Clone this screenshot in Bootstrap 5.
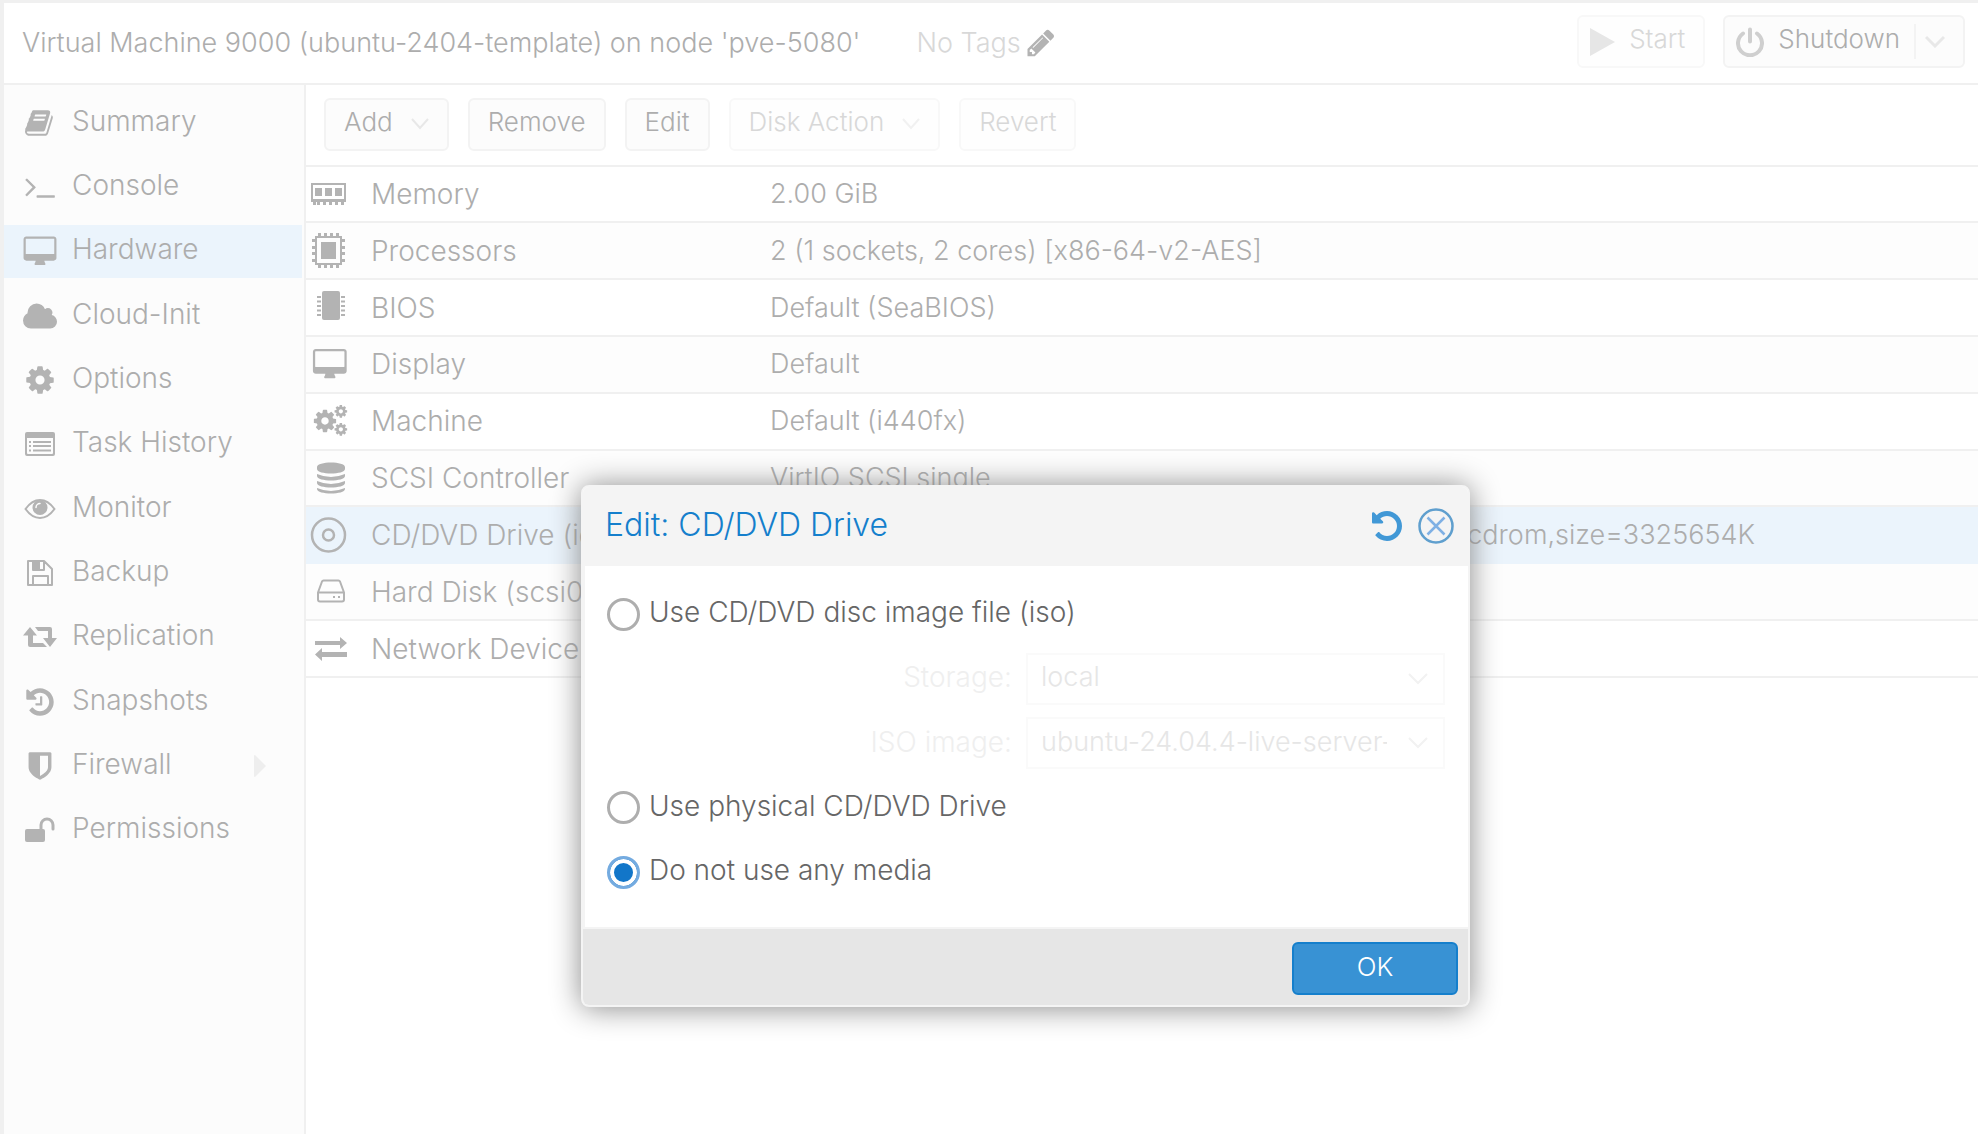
<!DOCTYPE html>
<html lang="en">
<head>
<meta charset="utf-8">
<meta name="viewport" content="width=device-width, initial-scale=1">
<title>Virtual Machine 9000 - Hardware</title>
<link href="https://cdn.jsdelivr.net/npm/bootstrap@5.3.0/dist/css/bootstrap.min.css" rel="stylesheet">
<style>
:root { --muted-ink:#adadad; --glyph:#b3b3b3; --faint-ink:#d8d8d8; --rule:#f0f0f0; --picked:#ebf4fc; --brand:#157fcc; }
body { font-family:Inter,"Liberation Sans",sans-serif; font-weight:300; font-size:27px; line-height:36px; color:var(--muted-ink); background:#fff; }
svg { display:block; flex:none; fill:currentColor; }
.line-art { fill:none; stroke:currentColor; }
.shell { min-height:100vh; border-left:4px solid var(--rule); border-top:3px solid var(--rule); }
.top-bar { height:82px; padding:0 13px 0 18px; border-bottom:2px solid var(--rule); }
.top-bar h1 { font-size:27px; line-height:36px; font-weight:300; margin:0; }
.tags { color:var(--faint-ink); margin-left:56px; gap:6px; }
.tags svg { color:var(--glyph); }
.power-tools { gap:18px; padding-bottom:3px; }
.tool { --bs-btn-font-size:26px; --bs-btn-font-weight:300; --bs-btn-line-height:36px; --bs-btn-padding-x:18px; --bs-btn-padding-y:0;
  --bs-btn-color:var(--muted-ink); --bs-btn-bg:#fcfcfc; --bs-btn-border-color:#f3f3f3; --bs-btn-border-width:2px; --bs-btn-border-radius:6px;
  --bs-btn-disabled-color:var(--faint-ink); --bs-btn-disabled-bg:#fefefe; --bs-btn-disabled-border-color:#f8f8f8; --bs-btn-disabled-opacity:1;
  height:53px; display:flex; align-items:center; gap:18px; }
.tool span { padding-bottom:5px; }
.with-icon { padding-left:11px; gap:14px; }
.tool .chev { color:#e8e8e8; }
.tool:disabled .chev { color:#f1f1f1; }
.split-part { display:flex; align-items:center; height:35px; padding-left:9px; border-left:2px solid #f3f3f3; }
.side { width:302px; background:#fcfcfc; border-right:2px solid var(--rule); padding:11px 2px 0 0; }
.side nav { height:761px; }
.side .nav-link { height:53px; padding:0 28px 0 19px; color:var(--muted-ink); font-size:28px; gap:15px; }
.side .nav-link span { padding-bottom:4px; }
.side .nav-link svg { width:34px; color:var(--glyph); }
.side .nav-link.active { background:var(--picked); }
.side .nav-link .twisty { width:12px; color:#eee; }
.actions { height:82px; padding:13px 18px 0; gap:19px; border-bottom:2px solid var(--rule); }
.specs { --bs-table-color:var(--muted-ink); --bs-table-bg:transparent; height:511px; margin:0; }
.specs > tbody > tr > * { padding:0; border-bottom:2px solid var(--rule); vertical-align:middle; white-space:nowrap; font-weight:300; }
.specs th { width:464px; font-size:28px; }
.specs th svg { color:var(--glyph); }
.specs .spec-name { gap:19px; padding-left:4px; }
.specs tr:nth-child(even) { background:#fdfdfd; }
.specs tr.picked { background:var(--picked); }
.specs tr.picked > * { border-color:var(--picked); }
.dialog-box { position:absolute; left:581px; top:485px; width:889px; background:#fff; border:2px solid #f4f4f4; border-radius:8px; box-shadow:0 1px 30px #888; color:#666; font-size:28px; overflow:hidden; }
.dialog-box header { height:79px; background:#f4f4f4; padding:0 14px 2px 22px; }
.dialog-box h2 { font-size:32px; line-height:40px; font-weight:300; color:var(--brand); margin:0; padding-bottom:2px; }
.tool-icon { padding:0; border:0; background:none; color:#4198d6; }
.dialog-box form { height:361px; padding:16px 23px 23px 22px; border-left:2px solid #f4f4f4; }
.choice { height:64px; gap:9px; }
.choice .form-check-input { width:33px; height:33px; margin:0; border:3px solid #aeaeae; background-color:#fff; background-image:none; }
.choice .form-check-input:checked { border-color:#74abe0; background-color:#1276c9; box-shadow:inset 0 0 0 4px #fff; }
.choice label { padding-bottom:4px; }
.field { height:64px; gap:14px; color:#efefef; }
.field label { padding-bottom:3px; }
.field .form-select { width:419px; height:52px; padding:0 56px 3px 13px; border:2px solid #fafafa; border-radius:0; color:#e6e6e6; background-color:#fff; font-weight:300; font-size:27px; line-height:36px; opacity:1;
  background-image:url("data:image/svg+xml,%3csvg xmlns='http://www.w3.org/2000/svg' viewBox='0 0 20 12'%3e%3cpath fill='none' stroke='%23f2f2f2' stroke-width='2' d='M1 1l9 9 9-9'/%3e%3c/svg%3e"); background-size:20px 12px; background-position:right 15px center; }
.dialog-box footer { height:78px; padding:13px 10px 0; background:#e6e6e6; border-top:2px solid #f4f4f4; }
.confirm { --bs-btn-font-size:26px; --bs-btn-font-weight:300; --bs-btn-line-height:36px; --bs-btn-padding-y:0; --bs-btn-color:#fff; --bs-btn-bg:#3892d4; --bs-btn-border-color:#157fcc; --bs-btn-border-width:2px; --bs-btn-border-radius:6px; width:166px; height:53px; }
.confirm span { display:block; padding-bottom:4px; }
</style>
<script src="https://cdn.jsdelivr.net/npm/bootstrap@5.3.0/dist/js/bootstrap.bundle.min.js"></script>
</head>
<body>
<svg width="0" height="0" class="position-absolute" aria-hidden="true">
  <defs>
    <path id="gear" d="M1152 896q0-106-75-181t-181-75-181 75-75 181 75 181 181 75 181-75 75-181zm512-109v222q0 12-8 23t-20 13l-185 28q-19 54-39 91 35 50 107 138 10 12 10 25t-9 23q-27 37-99 108t-94 71q-12 0-26-9l-138-108q-44 23-91 38-16 136-29 186-7 28-36 28h-222q-14 0-24.500-8.500t-11.500-21.500l-28-184q-49-16-90-37l-141 107q-10 9-25 9-14 0-25-11-126-114-165-168-7-10-7-23 0-12 8-23 15-21 51-66.500t54-70.500q-27-50-41-99l-183-27q-13-2-21-12.500t-8-23.500v-222q0-12 8-23t19-13l186-28q14-46 39-92-40-57-107-138-10-12-10-24 0-10 9-23 26-36 98.500-107.500t94.500-71.500q13 0 26 10l138 107q44-23 91-38 16-136 29-186 7-28 36-28h222q14 0 24.500 8.500t11.500 21.500l28 184q49 16 90 37l142-107q9-9 24-9 13 0 25 10 129 119 165 170 7 8 7 22 0 12-8 23-15 21-51 66.500t-54 70.500q26 50 41 98l183 28q13 2 21 12.500t8 23.500z"/>
    <path id="screen" d="M1728 992v-832q0-13-9.500-22.500t-22.500-9.500h-1600q-13 0-22.500 9.500t-9.500 22.500v832q0 13 9.500 22.500t22.500 9.500h1600q13 0 22.500-9.500t9.500-22.500zm128-832v1088q0 66-47 113t-113 47h-544q0 37 16 77.500t32 71 16 43.500q0 26-19 45t-45 19h-512q-26 0-45-19t-19-45q0-14 16-44t32-70 16-78h-544q-66 0-113-47t-47-113v-1088q0-66 47-113t113-47h1600q66 0 113 47t47 113z"/>
    <path id="rewind" d="M1664 896q0 156-61 298t-164 245-245 164-298 61q-172 0-327-72.500t-264-204.500q-7-10-6.500-22.500t8.500-20.500l137-138q10-9 25-9 16 2 23 12 73 95 179 147t225 52q104 0 198.500-40.500t163.500-109.500 109.500-163.500 40.500-198.500-40.500-198.500-109.500-163.500-163.500-109.500-198.500-40.500q-98 0-188 35.500t-160 101.500l137 138q31 30 14 69-17 40-59 40h-448q-26 0-45-19t-19-45v-448q0-42 40-59 39-17 69 14l130 129q107-101 244.500-156.500t284.500-55.500q156 0 298 61t245 164 164 245 61 298z"/>
  </defs>
</svg>

<div class="shell d-flex flex-column">
  <header class="top-bar d-flex align-items-center">
    <h1>Virtual Machine 9000 (ubuntu-2404-template) on node 'pve-5080'</h1>
    <div class="tags d-flex align-items-center"><span>No Tags</span>
      <svg width="28" height="30" viewBox="100 100 1600 1600"><path d="M491 1536l91-91-235-235-91 91v107h128v128h107zm523-928q0-22-22-22-10 0-17 7l-542 542q-7 7-7 17 0 22 22 22 10 0 17-7l542-542q7-7 7-17zm-54-192l416 416-832 832h-416v-416zm683 96q0 53-37 90l-166 166-416-416 166-165q36-38 90-38 53 0 91 38l235 234q37 39 37 91z"/></svg>
    </div>
    <div class="power-tools ms-auto d-flex">
      <button class="btn tool with-icon" type="button" disabled>
        <svg width="25" height="28" viewBox="0 0 25 28" color="#e6e6e6"><path d="M0 0l25 14-25 14z"/></svg><span>Start</span></button>
      <button class="btn tool with-icon" type="button">
        <svg class="line-art" width="28" height="30" viewBox="0 0 28 30" color="#cfcfcf" stroke-width="4" stroke-linecap="round"><path d="M7 6.500a12 12 0 1 0 14 0M14 2.500v12"/></svg><span>Shutdown</span>
        <i class="split-part"><svg class="line-art chev" width="20" height="13" viewBox="0 0 20 13" stroke-width="3"><path d="M1 2l9 9 9-9"/></svg></i></button>
    </div>
  </header>

  <div class="d-flex flex-grow-1">
    <aside class="side flex-shrink-0">
      <nav class="nav flex-column flex-nowrap justify-content-between">
        <a class="nav-link d-flex align-items-center" href="#"><svg height="30" viewBox="0 0 1792 1792"><path d="M1639 478q40 57 18 129l-275 906q-19 64-76.500 107.500t-122.500 43.500h-923q-77 0-148.500-53.500t-99.500-131.500q-24-67-2-127 0-4 3-27t4-37q1-8-3-21.500t-3-19.500q2-11 8-21t16.500-23.500 16.500-23.500q23-38 45-91.500t30-91.500q3-10 .5-30t-.5-28q3-11 17-28t17-23q21-36 42-92t25-90q1-9-2.500-32t.5-28q4-13 22-30.500t22-22.500q19-26 42.500-84.500t27.500-96.500q1-8-3-25.500t-2-26.500q2-8 9-18t18-23 17-21q8-12 16.500-30.500t15-35 16-36 19.500-32 26.500-23.500 36-11.500 47.500 5.500l-1 3q38-9 51-9h761q74 0 114 56t18 130l-274 906q-36 119-71.500 153.500t-128.500 34.500h-869q-27 0-38 15-11 16-1 43 24 70 144 70h923q29 0 56-15.500t35-41.500l300-987q7-22 5-57 38 15 59 43zm-1064 2q-4 13 2 22.500t20 9.500h608q13 0 25.500-9.500t16.500-22.500l21-64q4-13-2-22.500t-20-9.500h-608q-13 0-25.500 9.500t-16.500 22.500zm-83 256q-4 13 2 22.500t20 9.500h608q13 0 25.500-9.500t16.500-22.500l21-64q4-13-2-22.500t-20-9.500h-608q-13 0-25.500 9.500t-16.500 22.500z"/></svg><span>Summary</span></a>
        <a class="nav-link d-flex align-items-center" href="#"><svg height="30" viewBox="0 100 1792 1680"><path d="M649 983l-466 466q-10 10-23 10t-23-10l-50-50q-10-10-10-23t10-23l393-393-393-393q-10-10-10-23t10-23l50-50q10-10 23-10t23 10l466 466q10 10 10 23t-10 23zm1079 457v64q0 14-9 23t-23 9h-960q-14 0-23-9t-9-23v-64q0-14 9-23t23-9h960q14 0 23 9t9 23z"/></svg><span>Console</span></a>
        <a class="nav-link d-flex align-items-center active" href="#" aria-current="page"><svg height="31" viewBox="-96 0 1984 1750"><use href="#screen"/></svg><span>Hardware</span></a>
        <a class="nav-link d-flex align-items-center" href="#"><svg height="26" viewBox="64 128 1920 1408"><path d="M1984 1152q0 159-112.500 271.500t-271.500 112.500h-1088q-185 0-316.500-131.500t-131.500-316.500q0-132 71-241.500t187-163.500q-2-28-2-43 0-212 150-362t362-150q158 0 286.500 88t187.500 230q70-62 166-62 106 0 181 75t75 181q0 75-41 138 129 30 213 134.500t84 239.500z"/></svg><span>Cloud-Init</span></a>
        <a class="nav-link d-flex align-items-center" href="#"><svg height="32" viewBox="0 0 1792 1792"><use href="#gear"/></svg><span>Options</span></a>
        <a class="nav-link d-flex align-items-center" href="#"><svg height="26" viewBox="0 0 32 26"><path fill-rule="evenodd" d="M3 1h26a2 2 0 0 1 2 2v20a2 2 0 0 1-2 2H3a2 2 0 0 1-2-2V3a2 2 0 0 1 2-2zm0 6v15q0 1 1 1h24q1 0 1-1V7z"/><path d="M5 10h2v2H5zM5 14h2v2H5zM5 18.500h2v2H5zM9 10h18v2H9zM9 14h18v2H9zM9 18.500h18v2H9z"/></svg><span>Task History</span></a>
        <a class="nav-link d-flex align-items-center" href="#"><svg height="22" viewBox="0 0 32 22"><path class="line-art" stroke-width="2" d="M1.500 11Q8 2 16 2t14.500 9q-6.500 9-14.500 9T1.500 11z"/><circle cx="16" cy="9.500" r="7.500"/><path d="M12 9.500a4 4 0 0 1 4-4" fill="none" stroke="#fcfcfc" stroke-width="1.500" stroke-linecap="round"/></svg><span>Monitor</span></a>
        <a class="nav-link d-flex align-items-center" href="#"><svg height="28" viewBox="0 0 32 28"><path class="line-art" stroke-width="2" stroke-linejoin="round" d="M4 2h16l8 8v16H4zM9 26v-9h15v9M9 2v9h11V2"/><path d="M10 2h6v8h-6z"/></svg><span>Backup</span></a>
        <a class="nav-link d-flex align-items-center" href="#"><svg height="22" viewBox="0 0 34 22"><path d="M7 1l7 8.500h-4V17h10l4 4H7q-2 0-2-2V9.500H0zM12 1h15q2 0 2 2v9h5l-7 9-7-9h5V5H15z"/></svg><span>Replication</span></a>
        <a class="nav-link d-flex align-items-center" href="#"><svg height="32" viewBox="0 0 1792 1792"><use href="#rewind"/><path d="M1024 608v448q0 14-9 23t-23 9h-320q-14 0-23-9t-9-23v-64q0-14 9-23t23-9h224v-352q0-14 9-23t23-9h64q14 0 23 9t9 23z"/></svg><span>Snapshots</span></a>
        <a class="nav-link d-flex align-items-center" href="#"><svg height="32" viewBox="0 0 1792 1792"><path d="M1344 960v-640h-448v1137q119-63 213-137 235-184 235-360zm192-768v768q0 86-33.500 170.500t-83 150-118 127.500-126.500 103-121 77.500-89.500 49.500-42.500 20q-12 6-26 6t-26-6q-16-7-42.500-20t-89.500-49.500-121-77.500-126.500-103-118-127.500-83-150-33.500-170.500v-768q0-26 19-45t45-19h1152q26 0 45 19t19 45z"/></svg><span>Firewall</span><svg class="twisty ms-auto me-2" height="22" viewBox="0 0 12 22"><path d="M0 1q0-1 1-1l11 11L1 22q-1 0-1-1z"/></svg></a>
        <a class="nav-link d-flex align-items-center" href="#"><svg height="26" viewBox="0 0 32 26"><rect x="1" y="12" width="20" height="13" rx="2"/><path class="line-art" stroke-width="3" stroke-linecap="round" d="M17 12V8a6 6 0 0 1 12 0v4"/></svg><span>Permissions</span></a>
      </nav>
    </aside>

    <main class="flex-grow-1">
      <div class="actions d-flex">
        <button class="btn tool" type="button"><span>Add</span><svg class="line-art chev" width="18" height="13" viewBox="0 0 18 13" stroke-width="2"><path d="M1 1l8 9 8-9"/></svg></button>
        <button class="btn tool" type="button"><span>Remove</span></button>
        <button class="btn tool" type="button"><span>Edit</span></button>
        <button class="btn tool" type="button" disabled><span>Disk Action</span><svg class="line-art chev" width="18" height="13" viewBox="0 0 18 13" stroke-width="2"><path d="M1 1l8 9 8-9"/></svg></button>
        <button class="btn tool" type="button" disabled><span>Revert</span></button>
      </div>
      <table class="table specs">
        <tbody>
          <tr><th scope="row"><div class="spec-name d-flex align-items-center"><svg width="42" height="23" viewBox="-1 0 42 23"><path fill-rule="evenodd" d="M0 0h35v19h-2v3h-3v-3h-3v3h-3v-3h-3v3h-3v-3h-3v3h-3v-3H9v3H6v-3H5v3H2v-3H0zM2 2v14h31V2z"/><path d="M4 5h7v8H4zM14 5h7v8h-7zM24 5h7v8h-7z"/></svg>Memory</div></th><td>2.00 GiB</td></tr>
          <tr><th scope="row"><div class="spec-name d-flex align-items-center"><svg width="42" height="35" viewBox="-1 0 42 35"><path class="line-art" stroke-width="2" d="M5 4h25v27H5z"/><path d="M10 9h15v17H10zM7 0h3v3H7zM13 0h3v3h-3zM19 0h3v3h-3zM25 0h3v3h-3zM7 32h3v3H7zM13 32h3v3h-3zM19 32h3v3h-3zM25 32h3v3h-3zM1 6h3v3H1zM1 13h3v3H1zM1 19h3v3H1zM1 26h3v3H1zM31 6h3v3h-3zM31 13h3v3h-3zM31 19h3v3h-3zM31 26h3v3h-3z"/></svg>Processors</div></th><td>2 (1 sockets, 2 cores) [x86-64-v2-AES]</td></tr>
          <tr><th scope="row"><div class="spec-name d-flex align-items-center"><svg width="42" height="34" viewBox="-1 0 42 34"><rect x="11" y="0" width="18" height="29" rx="2"/><path class="line-art" stroke-width="2" d="M6 6h4M6 10.500h4M6 15h4M6 19.500h4M6 24h4M30 6h4M30 10.500h4M30 15h4M30 19.500h4M30 24h4"/></svg>BIOS</div></th><td>Default (SeaBIOS)</td></tr>
          <tr><th scope="row"><div class="spec-name d-flex align-items-center"><svg width="42" height="31" viewBox="-230 0 2388 1763"><use href="#screen"/></svg>Display</div></th><td>Default</td></tr>
          <tr><th scope="row"><div class="spec-name d-flex align-items-center"><svg width="42" height="32" viewBox="-1 0 42 32"><use href="#gear" transform="translate(1 3) scale(.0145)"/><use href="#gear" transform="translate(22.500 -1) scale(.0082)"/><use href="#gear" transform="translate(22.500 17) scale(.0082)"/></svg>Machine</div></th><td>Default (i440fx)</td></tr>
          <tr><th scope="row"><div class="spec-name d-flex align-items-center"><svg width="42" height="32" viewBox="-1 0 42 32"><path d="M6 5c0-6 28-6 28 0v2c0 6-28 6-28 0zM6 12q14 6 28 0v2c0 6-28 6-28 0zM6 19q14 6 28 0v2c0 6-28 6-28 0zM6 26q14 6 28 0v1c0 6-28 6-28 0z"/></svg>SCSI Controller</div></th><td>VirtIO SCSI single</td></tr>
          <tr class="picked"><th scope="row"><div class="spec-name d-flex align-items-center"><svg class="line-art" width="42" height="36" viewBox="-1 0 42 36" stroke-width="2.500"><circle cx="17.500" cy="18" r="16.500"/><circle cx="17.500" cy="18" r="5.500"/></svg>CD/DVD Drive (ide2)</div></th><td>local:iso/ubuntu-24.04.4-live-server-amd64.iso,media=cdrom,size=3325654K</td></tr>
          <tr><th scope="row"><div class="spec-name d-flex align-items-center"><svg class="line-art" width="42" height="26" viewBox="-1 0 42 26" stroke-width="2" stroke-linejoin="round"><path d="M7 13.500L11 2.500q.5-1 1.500-1h15q1 0 1.500 1l4 11v7q0 2-2 2H9q-2 0-2-2zM7 13.500h26M22 18h2M27 18h2"/></svg>Hard Disk (scsi0)</div></th><td></td></tr>
          <tr><th scope="row"><div class="spec-name d-flex align-items-center"><svg width="42" height="24" viewBox="-1 0 42 24"><path d="M4 4h25V0l7 6-7 6V8H4zM36 15H11v-4l-7 6.500 7 6.500v-4h25z"/></svg>Network Device (net0)</div></th><td></td></tr>
        </tbody>
      </table>
    </main>
  </div>
</div>

<section class="dialog-box" role="dialog" aria-labelledby="dlgTitle">
  <header class="d-flex align-items-center">
    <h2 id="dlgTitle" class="me-auto">Edit: CD/DVD Drive</h2>
    <button class="tool-icon me-3" type="button" aria-label="Reset"><svg width="30" height="30" viewBox="128 128 1536 1536"><use href="#rewind"/></svg></button>
    <button class="tool-icon" type="button" aria-label="Close"><svg class="line-art" width="36" height="36" viewBox="0 0 36 36"><circle cx="18" cy="18" r="16.500" stroke="#5f9fce" stroke-width="2.500"/><path d="M9.500 9.500l17 17M26.500 9.500l-17 17" stroke="#7fb0e4" stroke-width="2.500"/></svg></button>
  </header>
  <form class="d-flex flex-column justify-content-between">
    <div class="choice d-flex align-items-center"><input class="form-check-input" type="radio" name="media" id="mIso"><label for="mIso">Use CD/DVD disc image file (iso)</label></div>
    <div class="field d-flex align-items-center justify-content-end"><label for="storage">Storage:</label><select class="form-select" id="storage" disabled><option>local</option></select></div>
    <div class="field d-flex align-items-center justify-content-end"><label for="iso">ISO image:</label><select class="form-select" id="iso" disabled><option>ubuntu-24.04.4-live-server-amd64.iso</option></select></div>
    <div class="choice d-flex align-items-center"><input class="form-check-input" type="radio" name="media" id="mPhys"><label for="mPhys">Use physical CD/DVD Drive</label></div>
    <div class="choice d-flex align-items-center"><input class="form-check-input" type="radio" name="media" id="mNone" checked><label for="mNone">Do not use any media</label></div>
  </form>
  <footer class="d-flex justify-content-end"><button class="btn confirm" type="button"><span>OK</span></button></footer>
</section>
</body>
</html>
